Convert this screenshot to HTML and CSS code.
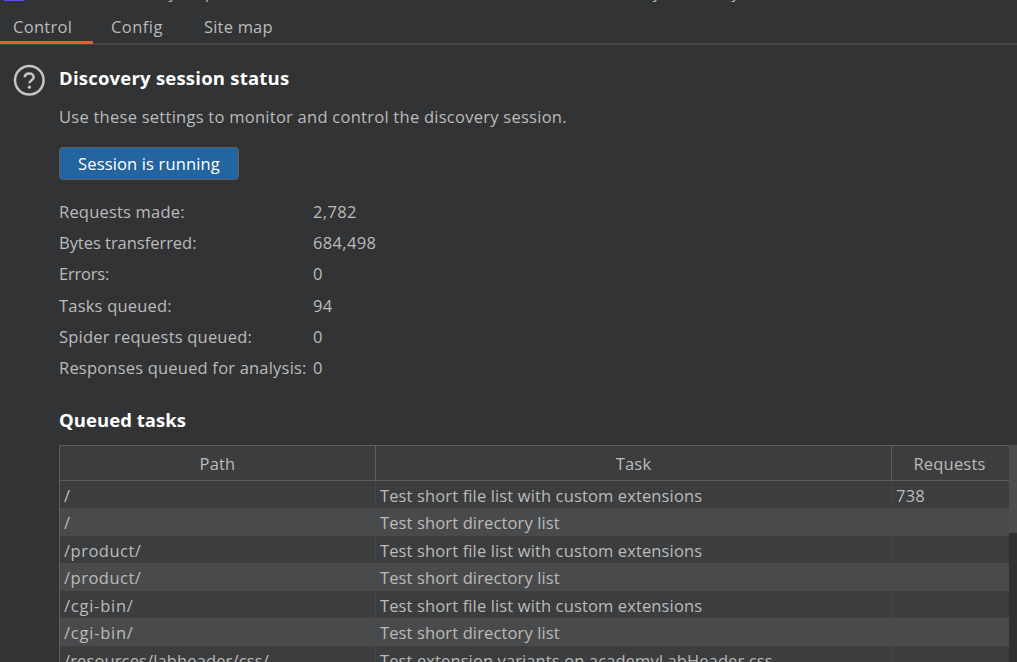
FILE: index.html
```html
<!DOCTYPE html>
<html lang="en">
<head>
<meta charset="utf-8">
<title>Content discovery</title>
<link rel="stylesheet" href="styles.css">
</head>
<body>
<header class="titlebar">
  <span class="app-icon"></span>
  <span class="title-start">Content discovery: https://</span>
  <span class="title-end">web-security-academy.net/</span>
</header>
<nav class="tabs">
  <a class="tab active">Control</a>
  <a class="tab config">Config</a>
  <a class="tab sitemap">Site map</a>
</nav>
<main class="panel">
  <svg class="help" viewBox="0 0 32 32" fill="none">
    <circle cx="16.3" cy="16.3" r="14.3" stroke="#c4c5c6" stroke-width="2.5"/>
    <path d="M11.8 13.3C11.9 10.9 13.7 9.4 16.2 9.4s4.5 1.5 4.5 3.8c0 3-4.2 3.2-4.2 6" stroke="#c4c5c6" stroke-width="2.5"/>
    <circle cx="16.4" cy="23.2" r="1.6" fill="#c4c5c6"/>
  </svg>
  <div class="content">
    <h1 class="heading">Discovery session status</h1>
    <p class="intro">Use these settings to monitor and control the discovery session.</p>
    <button class="run">Session is running</button>
    <dl class="stats">
      <dt>Requests made:</dt><dd>2,782</dd>
      <dt class="bytes">Bytes transferred:</dt><dd>684,498</dd>
      <dt class="errors">Errors:</dt><dd>0</dd>
      <dt>Tasks queued:</dt><dd>94</dd>
      <dt>Spider requests queued:</dt><dd>0</dd>
      <dt>Responses queued for analysis:</dt><dd>0</dd>
    </dl>
    <h2 class="heading queued">Queued tasks</h2>
    <div class="table-wrap">
      <div class="table">
        <div class="row head"><span>Path</span><span>Task</span><span>Requests</span></div>
        <div class="row"><span>/</span><span class="files">Test short file list with custom extensions</span><span>738</span></div>
        <div class="row alt"><span>/</span><span class="dirs">Test short directory list</span><span></span></div>
        <div class="row"><span class="path">/product/</span><span class="files">Test short file list with custom extensions</span><span></span></div>
        <div class="row alt"><span class="path">/product/</span><span class="dirs">Test short directory list</span><span></span></div>
        <div class="row"><span class="path cgi">/cgi-bin/</span><span class="files">Test short file list with custom extensions</span><span></span></div>
        <div class="row alt"><span class="path cgi">/cgi-bin/</span><span class="dirs">Test short directory list</span><span></span></div>
        <div class="row"><span class="files">/resources/labheader/css/</span><span class="variants">Test extension variants on academyLabHeader.css</span><span></span></div>
      </div>
      <div class="scrollbar"><div class="thumb"></div></div>
    </div>
  </div>
</main>
</body>
</html>
```
FILE: styles.css
```css
* { box-sizing: border-box; }
body {
  margin: 0;
  width: 1017px;
  height: 662px;
  overflow: hidden;
  background: #323335;
  color: #bbbbbb;
  font: 16.5px/22px "Open Sans", "Noto Sans", sans-serif;
  letter-spacing: 0.2px;
}
.titlebar {
  display: flex;
  align-items: flex-end;
  height: 2px;
  overflow: hidden;
  font-size: 15px;
  line-height: 19px;
  white-space: nowrap;
}
.app-icon { width: 20px; height: 20px; margin: 0 23px 1px 4px; background: #5a4dff; flex: none; }
.title-start { width: 509px; flex: none; }
.title-end { letter-spacing: 1.4px; }
.tabs {
  display: flex;
  height: 43px;
  border-bottom: 2px solid #464749;
}
.tab { height: 42px; padding: 14px 0 0 19px; width: 93px; }
.tab.active { padding-left: 13px; border-bottom: 3px solid #dc6430; letter-spacing: 0.3px; }
.tab.config { padding-left: 18px; letter-spacing: 0.45px; }
.tab.sitemap { padding-left: 18px; width: 100px; }
.panel { display: flex; padding: 19px 0 0 13px; }
.help { width: 32px; height: 32px; flex: none; }
.content { margin-left: 14px; width: 958px; }
.heading {
  margin: 3px 0 0;
  font-size: 18.5px;
  line-height: 22px;
  font-weight: 700;
  letter-spacing: 0.22px;
  color: #ffffff;
}
.intro { margin: 17px 0 0; letter-spacing: 0.26px; }
.run {
  display: block;
  width: 180px;
  height: 33px;
  margin: 19px 0 0;
  padding: 0;
  border: 1px solid #5d6166;
  border-radius: 4px;
  background: #25659f;
  color: #ffffff;
  font: inherit;
  letter-spacing: 0.15px;
}
.stats {
  display: grid;
  grid-template-columns: 254px auto;
  grid-auto-rows: 31.2px;
  margin: 21px 0 0;
  white-space: nowrap;
}
.stats dd { margin: 0; letter-spacing: 0.35px; }
.bytes { letter-spacing: -0.03px; }
.errors { letter-spacing: -0.2px; }
.queued { margin-top: 21px; letter-spacing: 0.05px; }
.table-wrap { display: flex; margin-top: 14px; height: 217px; overflow: hidden; }
.table { width: 950px; border: 1px solid #5c5e60; border-width: 1px 0 0 1px; background: #3c3d3e; }
.row {
  display: grid;
  grid-template-columns: 315px 516px 118px;
  height: 27px;
  line-height: 29px;
  white-space: nowrap;
}
.row span { padding-left: 4px; border-left: 1px solid #454648; }
.row span:first-child { border-left: 0; }
.row.alt { height: 28px; background: #494a4b; }
.row.alt span { border-color: transparent; }
.row .files { letter-spacing: 0.13px; }
.row .dirs { letter-spacing: 0.13px; }
.row .variants { letter-spacing: 0.11px; }
.row .path { letter-spacing: 0.5px; }
.row .cgi { letter-spacing: 0.75px; }
.row.head {
  height: 35px;
  line-height: 36px;
  border-bottom: 1px solid #5c5e60;
  text-align: center;
}
.row.head span { padding: 0; border-color: #5c5e60; }
.row.head span:last-child { padding-right: 2px; }
.scrollbar { width: 8px; background: #303133; }
.thumb { height: 88px; background: #4c4d4e; }
```
